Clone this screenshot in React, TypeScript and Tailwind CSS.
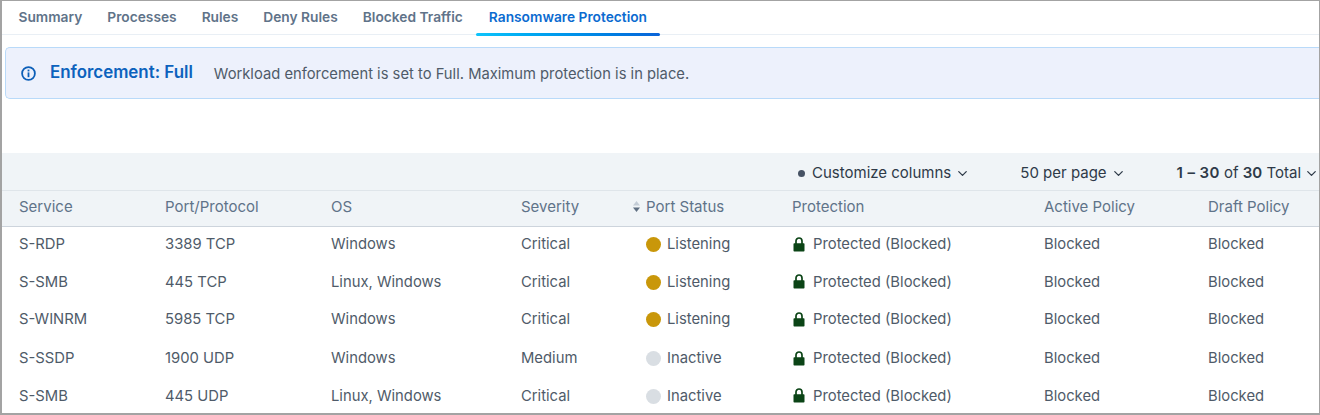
import { ChevronDown } from "lucide-react";

const TABS = ["Summary", "Processes", "Rules", "Deny Rules", "Blocked Traffic"];

const COLUMNS = "grid grid-cols-[146px_166px_190px_125px_146px_252px_164px_1fr] pl-[17px] items-center";

interface Row {
  service: string;
  port: string;
  os: string;
  severity: string;
  listening: boolean;
  height: string;
}

const ROWS: Row[] = [
  { service: "S-RDP", port: "3389 TCP", os: "Windows", severity: "Critical", listening: true, height: "h-[35px]" },
  { service: "S-SMB", port: "445 TCP", os: "Linux, Windows", severity: "Critical", listening: true, height: "h-[40px]" },
  { service: "S-WINRM", port: "5985 TCP", os: "Windows", severity: "Critical", listening: true, height: "h-[35px]" },
  { service: "S-SSDP", port: "1900 UDP", os: "Windows", severity: "Medium", listening: false, height: "h-[43px]" },
  { service: "S-SMB", port: "445 UDP", os: "Linux, Windows", severity: "Critical", listening: false, height: "h-[32px]" },
];

function LockIcon() {
  return (
    <svg width="12" height="15" viewBox="0 0 12 15" className="mr-[8px] ml-[1px] mb-[1px] shrink-0">
      <path d="M3 7V4a3 3 0 0 1 6 0v3" fill="none" stroke="#0b4416" strokeWidth="1.7" />
      <rect x="0.5" y="6.3" width="11" height="8.2" rx="0.8" fill="#0b4416" />
    </svg>
  );
}

function SortIcon() {
  return (
    <svg width="9" height="13" viewBox="0 0 9 13" className="absolute left-[-14px] top-[4px]">
      <path d="M4.5 1 8 5.5H1Z" fill="#c3ccd6" />
      <path d="M4.5 12 1 7.5h7Z" fill="#5f6f82" />
    </svg>
  );
}

export default function App() {
  return (
    <div className="h-[415px] w-[1320px] overflow-hidden bg-white font-['Inter',sans-serif]">
      <div className="h-[415px] w-[1320px] overflow-hidden border-t border-r border-b-2 border-l-2 border-[#a3a3a3]">
        <nav className="flex h-[34px] items-stretch border-b border-[#e9eff5] pl-[4px] text-[13.75px] font-semibold">
          {TABS.map((tab) => (
            <span key={tab} className="flex items-center px-[12.5px] text-[#5f7389]">
              {tab}
            </span>
          ))}
          <span className="relative ml-[1px] flex items-center px-[12.5px] text-[#0b6bd0]">
            Ransomware Protection
            <span className="absolute right-0 bottom-[-2px] left-0 h-[3px] rounded-sm bg-gradient-to-r from-[#0fc4fb] to-[#0a63d8]" />
          </span>
        </nav>

        <div className="mt-[12px] ml-[3px] flex h-[52px] items-center rounded-l-[5px] border-y border-l border-[#b9daf9] bg-[#edf1fc] pl-[15px]">
          <svg width="15" height="15" viewBox="0 0 15 15" className="shrink-0">
            <circle cx="7.5" cy="7.5" r="6.4" fill="none" stroke="#0c5fb8" strokeWidth="1.8" />
            <rect x="6.6" y="6.4" width="1.8" height="4.8" fill="#0c5fb8" />
            <rect x="6.6" y="3.6" width="1.8" height="1.8" fill="#0c5fb8" />
          </svg>
          <span className="ml-[14px] text-[16.9px] font-semibold text-[#0c62bd]">Enforcement: Full</span>
          <span className="mt-[2px] ml-[21px] text-[14.75px] text-[#4f5b69]">
            Workload enforcement is set to Full. Maximum protection is in place.
          </span>
        </div>

        <div className="mt-[54px] flex h-[38px] items-center border-b border-[#dfe5ea] bg-[#f0f4f7] pt-[4px] text-[15px] whitespace-nowrap text-[#2e3a48]">
          <span className="ml-[796px] h-[7px] w-[7px] shrink-0 rounded-full bg-[#465264]" />
          <span className="ml-[7px]">Customize columns</span>
          <ChevronDown size={15} className="ml-[4px] shrink-0" />
          <span className="ml-[50px]">50 per page</span>
          <ChevronDown size={15} className="ml-[4px] shrink-0" />
          <span className="ml-[51px]">
            <b className="font-semibold tracking-[0.4px]">1 – 30</b> of <b className="font-semibold">30</b> Total
          </span>
          <ChevronDown size={15} className="ml-[3px] shrink-0" />
        </div>

        <div className={`${COLUMNS} h-[36px] border-b border-[#cdd4dc] bg-[#f0f4f7] pb-[3px] text-[15px] text-[#5f7389]`}>
          <span>Service</span>
          <span>Port/Protocol</span>
          <span>OS</span>
          <span>Severity</span>
          <span className="relative">
            <SortIcon />
            Port Status
          </span>
          <span>Protection</span>
          <span>Active Policy</span>
          <span>Draft Policy</span>
        </div>

        {ROWS.map((row) => (
          <div key={`${row.service}-${row.port}`} className={`${COLUMNS} ${row.height} text-[14.8px] text-[#4f5b69]`}>
            <span>{row.service}</span>
            <span>{row.port}</span>
            <span>{row.os}</span>
            <span>{row.severity}</span>
            <span className="flex items-center">
              <span className={`mr-[6px] h-[15px] w-[15px] rounded-full ${row.listening ? "bg-[#c9970a]" : "bg-[#d9dee3]"}`} />
              {row.listening ? "Listening" : "Inactive"}
            </span>
            <span className="flex items-center">
              <LockIcon />
              Protected (Blocked)
            </span>
            <span>Blocked</span>
            <span>Blocked</span>
          </div>
        ))}
      </div>
    </div>
  );
}
